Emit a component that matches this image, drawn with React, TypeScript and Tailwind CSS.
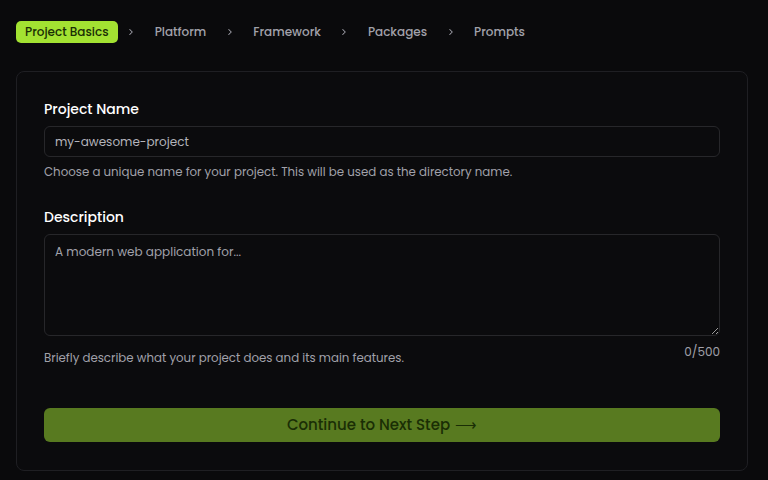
import React from "react";

const font = { fontFamily: "Poppins, Inter, 'Noto Sans', sans-serif" };

function Chevron() {
  return (
    <svg width="10" height="10" viewBox="0 0 24 24" fill="none" stroke="#a1a1aa" strokeWidth="2.5" strokeLinecap="round" strokeLinejoin="round">
      <path d="M9 6l6 6-6 6" />
    </svg>
  );
}

export default function App() {
  const steps = ["Platform", "Framework", "Packages", "Prompts"];
  return (
    <div className="w-[768px] h-[480px] bg-[#0a0a0c] px-4 pt-[21px] overflow-hidden" style={font}>
      <div className="flex items-center h-[22px]">
        <div className="h-[22px] px-[9px] rounded-[5px] bg-[#a3e232] text-[#1a2e05] text-[12px] font-medium flex items-center">
          Project Basics
        </div>
        {steps.map((s) => (
          <div key={s} className="flex items-center">
            <div className="w-[27px] flex justify-center"><Chevron /></div>
            <span className="px-[10px] text-[12px] font-medium text-[#a1a1aa]">{s}</span>
          </div>
        ))}
      </div>
      <div className="mt-[28px] w-[732px] border border-[#1f1f23] rounded-[8px] bg-[#0b0b0d] px-[27px] pt-[27px] pb-[28px]">
        <div className="text-[14px] font-medium text-white leading-[20px]">Project Name</div>
        <div className="mt-[7px] h-[31px] border border-[#27272a] rounded-[6px] flex items-center px-[10px] text-[12px] text-[#b4b4bb]">
          my-awesome-project
        </div>
        <div className="mt-[6px] text-[11.8px] text-[#a1a1aa] leading-[18px]">
          Choose a unique name for your project. This will be used as the directory name.
        </div>
        <div className="mt-[26px] text-[14px] font-medium text-white leading-[20px]">Description</div>
        <textarea
          className="mt-[7px] block w-full h-[102px] border border-[#27272a] rounded-[6px] bg-transparent px-[10px] py-[8px] text-[12px] text-[#b4b4bb] placeholder:text-[#a1a1aa] outline-none"
          placeholder="A modern web application for..."
          style={font}
        />
        <div className="flex justify-between items-start mt-[7px]">
          <div className="mt-[6px] text-[11.8px] text-[#a1a1aa] leading-[18px]">
            Briefly describe what your project does and its main features.
          </div>
          <div className="text-[12px] text-[#a1a1aa] leading-[18px]">0/500</div>
        </div>
        <button className="mt-[41px] w-full h-[34px] rounded-[6px] bg-[#587a20] text-[#1a2e05] text-[15px] font-medium flex items-center justify-center" style={font}>
          Continue to Next Step <span className="ml-[5px]" style={{ fontFamily: "'Liberation Sans', sans-serif" }}>⟶</span>
        </button>
      </div>
    </div>
  );
}
